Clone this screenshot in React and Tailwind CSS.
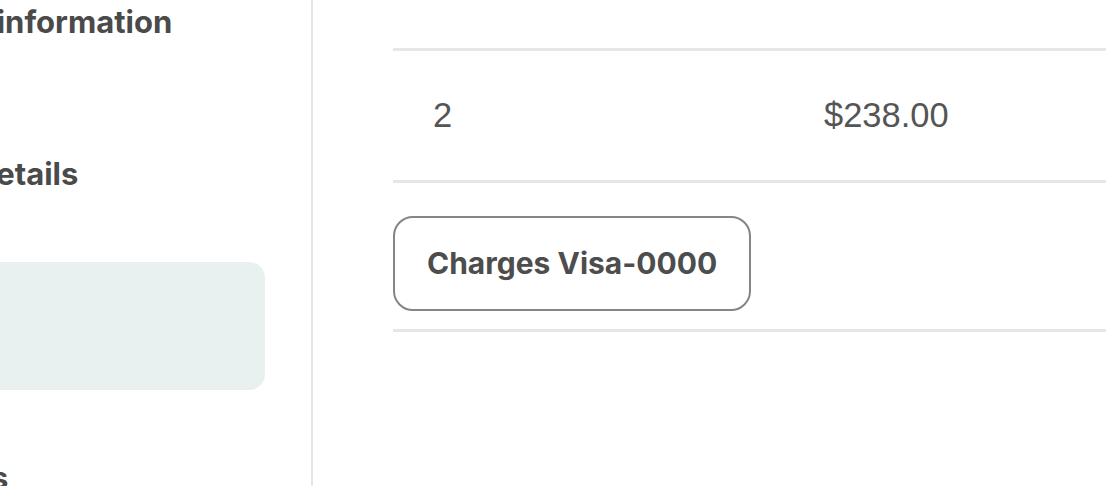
import React from "react";

const navItems = [
  { label: "Additional information", active: false },
  { label: "Shipping details", active: false },
  { label: "Payment", active: true },
  { label: "Documents", active: false },
];

const columns = ["Units", "Price", "Total"];
const rows = [{ id: 1, units: "2", price: "$238.00", total: "$476.00" }];

const App = () => {
  return (
    <div className="flex h-[486px] w-full overflow-hidden bg-white">
      <aside className="w-[313px] shrink-0 overflow-hidden border-r-2 border-[#e6e6e6]">
        <nav className="-ml-[200px] -mt-[42px] flex w-[465px] flex-col gap-6 font-['Inter',sans-serif]">
          {navItems.map((item) => (
            <div
              key={item.label}
              className={`flex h-[128px] shrink-0 items-center rounded-2xl text-[31px] font-bold whitespace-nowrap text-[#4a4a4a] ${
                item.active ? "bg-[#e8f1f0]" : ""
              }`}
            >
              <span className="ml-[35px]">{item.label}</span>
            </div>
          ))}
        </nav>
      </aside>

      <main className="flex-1 overflow-hidden pl-[80px]">
        <div className="w-[1173px] font-['Liberation_Sans',Arial,sans-serif] text-[34.5px] text-[#555555]">
          <div className="-mt-[81px] grid h-[132px] grid-cols-[391px_391px_391px] items-center border-b-[3px] border-[#e6e6e6]">
            {columns.map((col) => (
              <div key={col} className="pl-10">
                {col}
              </div>
            ))}
          </div>

          {rows.map((row) => (
            <div
              key={row.id}
              className="grid h-[132px] grid-cols-[391px_391px_391px] items-center border-b-[3px] border-[#e6e6e6]"
            >
              <div className="pl-10">{row.units}</div>
              <div className="pl-10">{row.price}</div>
              <div className="pl-10">{row.total}</div>
            </div>
          ))}

          <div className="border-b-[3px] border-[#e6e6e6] pt-[33px] pb-[18px]">
            <button className="flex h-[95px] items-center rounded-[20px] border-2 border-[#858585] px-[32px] font-['Inter',sans-serif] text-[30px] font-bold text-[#4d4d4d]">
              Charges Visa-0000
            </button>
          </div>
        </div>
      </main>
    </div>
  );
};

export default App;
